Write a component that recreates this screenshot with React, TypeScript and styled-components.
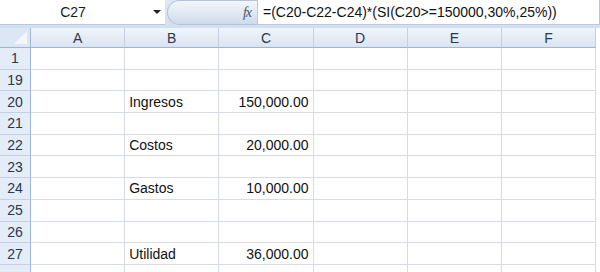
import styled, { createGlobalStyle } from "styled-components";

const GlobalStyle = createGlobalStyle`
  html, body {
    margin: 0;
    padding: 0;
    background: #ffffff;
    overflow: hidden;
  }
  body {
    font-family: "Liberation Sans", Arial, sans-serif;
  }
`;

const COL_W = 94.2;
const ROW_H = 21.7;

const Window = styled.div`
  width: 600px;
  height: 272px;
  overflow: hidden;
  display: flex;
  flex-direction: column;
  background: #ffffff;
`;

const FormulaBar = styled.div`
  height: 28px;
  display: flex;
  align-items: stretch;
  background: linear-gradient(#dfe8f5, #d3deef);
  box-sizing: border-box;
  padding-bottom: 3px;
  flex-shrink: 0;
`;

const NameBox = styled.div`
  width: 165px;
  flex-shrink: 0;
  display: flex;
  align-items: center;
  background: #ffffff;
  border-bottom: 1px solid #b9c9df;
  box-sizing: border-box;
  font-size: 14px;
  color: #1a1a1a;
`;

const NameText = styled.span`
  width: 146px;
  flex-shrink: 0;
  text-align: center;
`;

const DropArrow = styled.span`
  margin-left: 7px;
  width: 0;
  height: 0;
  border-left: 4px solid transparent;
  border-right: 4px solid transparent;
  border-top: 4px solid #222;
`;

const FxPill = styled.div`
  width: 90px;
  flex-shrink: 0;
  display: flex;
  align-items: center;
  justify-content: flex-end;
  padding-right: 6px;
  box-sizing: border-box;
  border-radius: 14px 0 0 14px;
  background: linear-gradient(#f4f7fb, #cfdaea);
  border: 1px solid #b3c3da;
  border-right: none;
  margin-left: 2px;
`;

const FxLabel = styled.span`
  font-family: "Liberation Serif", serif;
  font-style: italic;
  font-size: 14px;
  color: #445566;
  letter-spacing: -1px;
`;

const FormulaInput = styled.div`
  flex: 1;
  display: flex;
  align-items: center;
  padding-left: 5px;
  background: #ffffff;
  border: 1px solid #b9c9df;
  border-top: none;
  font-size: 14px;
  color: #111;
  white-space: nowrap;
`;

const Sheet = styled.div`
  display: grid;
  grid-template-columns: 31px repeat(6, ${COL_W}px);
  grid-template-rows: 20px repeat(11, ${ROW_H}px);
`;

const Corner = styled.div`
  position: relative;
  background: #dce6f4;
  border-right: 1px solid #9eb6ce;
  border-bottom: 1px solid #9eb6ce;
  box-sizing: border-box;
  &::after {
    content: "";
    position: absolute;
    right: 3px;
    bottom: 3px;
    border-left: 13px solid transparent;
    border-bottom: 13px solid #f3f7fc;
  }
`;

const ColHeader = styled.div`
  display: flex;
  align-items: center;
  justify-content: center;
  background: linear-gradient(#f1f5fb, #dae4f1);
  border-right: 1px solid #c5d1e2;
  border-bottom: 1px solid #9eb6ce;
  box-sizing: border-box;
  font-size: 14px;
  color: #27394e;
`;

const RowHeader = styled.div`
  display: flex;
  align-items: center;
  justify-content: center;
  background: #e4ecf7;
  border-right: 1px solid #9eb6ce;
  border-bottom: 1px solid #c5d1e2;
  box-sizing: border-box;
  font-size: 14px;
  color: #27394e;
`;

const Cell = styled.div<{ $align?: "left" | "right" }>`
  display: flex;
  align-items: center;
  justify-content: ${({ $align }) => ($align === "right" ? "flex-end" : "flex-start")};
  padding: 0 4px;
  border-right: 1px solid #d6dbe5;
  border-bottom: 1px solid #d6dbe5;
  box-sizing: border-box;
  font-size: 14px;
  color: #111;
  white-space: nowrap;
  overflow: hidden;
`;

const cols = ["A", "B", "C", "D", "E", "F"];

const rows: { n: string; label?: string; value?: string }[] = [
  { n: "1" },
  { n: "19" },
  { n: "20", label: "Ingresos", value: "150,000.00" },
  { n: "21" },
  { n: "22", label: "Costos", value: "20,000.00" },
  { n: "23" },
  { n: "24", label: "Gastos", value: "10,000.00" },
  { n: "25" },
  { n: "26" },
  { n: "27", label: "Utilidad", value: "36,000.00" },
  { n: "" },
];

export default function App() {
  return (
    <Window>
      <GlobalStyle />
      <FormulaBar>
        <NameBox>
          <NameText>C27</NameText>
          <DropArrow />
        </NameBox>
        <FxPill>
          <FxLabel>fx</FxLabel>
        </FxPill>
        <FormulaInput>=(C20-C22-C24)*(SI(C20&gt;=150000,30%,25%))</FormulaInput>
      </FormulaBar>
      <Sheet>
        <Corner />
        {cols.map((c) => (
          <ColHeader key={c}>{c}</ColHeader>
        ))}
        {rows.map((r, i) => (
          <>
            <RowHeader key={`h${i}`}>{r.n}</RowHeader>
            <Cell key={`a${i}`} />
            <Cell key={`b${i}`}>{r.label}</Cell>
            <Cell key={`c${i}`} $align="right">
              {r.value}
            </Cell>
            <Cell key={`d${i}`} />
            <Cell key={`e${i}`} />
            <Cell key={`f${i}`} />
          </>
        ))}
      </Sheet>
    </Window>
  );
}
